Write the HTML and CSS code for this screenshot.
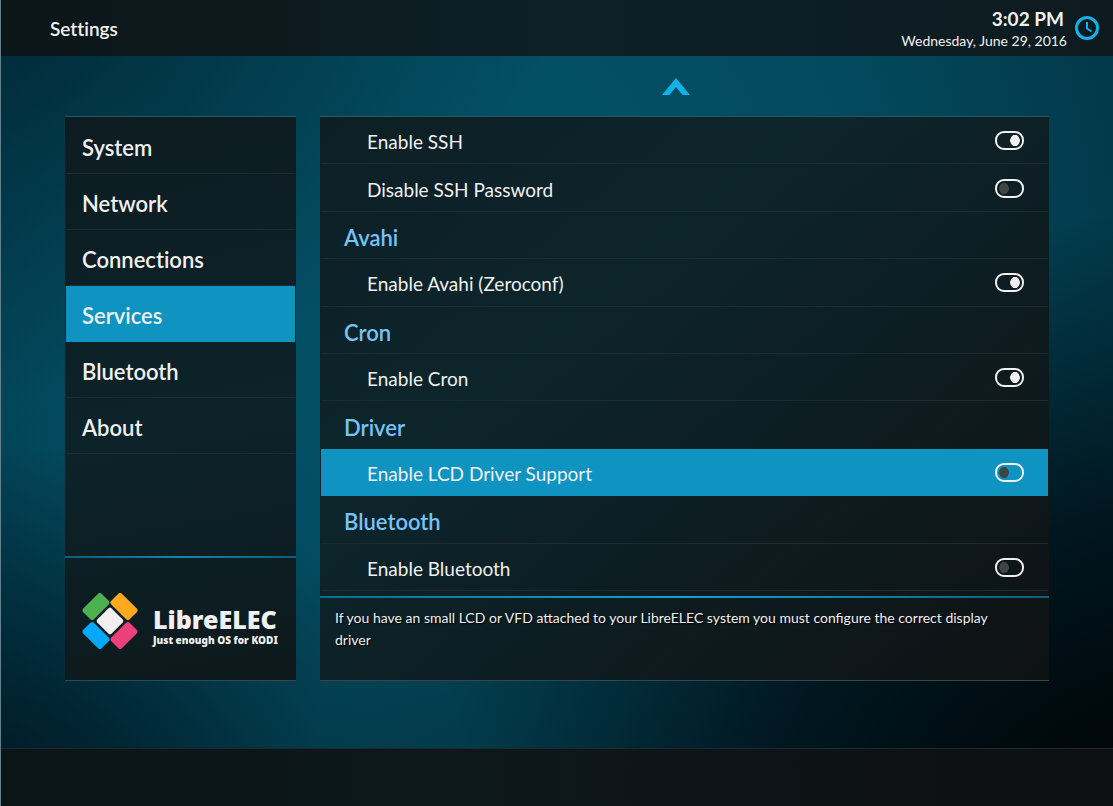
FILE: index.html
```html
<!DOCTYPE html>
<html lang="en">
<head>
	<meta charset="utf-8">
	<title>LibreELEC Settings</title>
	<link rel="stylesheet" href="styles.css">
</head>
<body>

	<header class="topbar">
		<h1>Settings</h1>
		<div class="clock">
			<div class="time">3:02 PM</div>
			<div class="date">Wednesday, June 29, 2016</div>
		</div>
		<svg class="clock-icon" width="24" height="24" viewBox="0 0 24 24" fill="none" stroke="#12b2e7">
			<circle cx="12" cy="12" r="10.5" stroke-width="3"/>
			<path d="M12 6v6.5l4.5 3" stroke-width="2"/>
		</svg>
	</header>

	<main>
		<aside class="panel sidebar">
			<nav>
				<a href="#system">System</a>
				<a href="#network">Network</a>
				<a href="#connections">Connections</a>
				<a href="#services" class="active">Services</a>
				<a href="#bluetooth">Bluetooth</a>
				<a href="#about">About</a>
			</nav>
			<div class="logo">
				<svg width="56" height="56" viewBox="0 0 56 56">
					<rect x="1" y="6" width="26" height="15" rx="2.5" fill="#4caf50" transform="rotate(-45 14 13.5)"/>
					<rect x="29" y="6" width="26" height="15" rx="2.5" fill="#ffa91f" transform="rotate(45 42 13.5)"/>
					<rect x="1" y="35" width="26" height="15" rx="2.5" fill="#03a9f9" transform="rotate(45 14 42.5)"/>
					<rect x="29" y="35" width="26" height="15" rx="2.5" fill="#ec407a" transform="rotate(-45 42 42.5)"/>
					<rect x="18" y="18" width="20" height="20" rx="2" fill="#f0f0f0" transform="rotate(45 28 28)"/>
				</svg>
				<div class="logo-text">
					<div class="logo-name">LibreELEC</div>
					<div class="logo-sub">Just enough OS for KODI</div>
				</div>
			</div>
		</aside>

		<section class="panel content">
			<svg class="scroll-up" width="28" height="17" viewBox="0 0 28 17">
				<path d="M14 0L28 17H20.500L14 9L7.500 17H0z" fill="#12b2e7"/>
			</svg>
			<div class="settings">
				<label class="row">Enable SSH <input type="checkbox" checked></label>
				<label class="row">Disable SSH Password <input type="checkbox"></label>
				<h2 class="row">Avahi</h2>
				<label class="row">Enable Avahi (Zeroconf) <input type="checkbox" checked></label>
				<h2 class="row">Cron</h2>
				<label class="row">Enable Cron <input type="checkbox" checked></label>
				<h2 class="row before-active">Driver</h2>
				<label class="row active">Enable LCD Driver Support <input type="checkbox"></label>
				<h2 class="row">Bluetooth</h2>
				<label class="row">Enable Bluetooth <input type="checkbox"></label>
			</div>
			<p class="description">If you have an small LCD or VFD attached to your LibreELEC system you must configure the correct display driver</p>
		</section>
	</main>

	<footer></footer>

</body>
</html>
```

FILE: styles.css
```css
* {
	box-sizing: border-box;
}
body {
	margin: 0;
	min-height: 100vh;
	display: flex;
	flex-direction: column;
	border-left: 1px solid #64808c;
	color: #f0f0f0;
	font-family: Lato, "Liberation Sans", sans-serif;
	background-color: #02323f;
	background-image:
		radial-gradient(ellipse at 105% 100%, #00060a 5%, rgba(0, 10, 16, 0.75) 25%, rgba(0, 20, 28, 0) 52%),
		radial-gradient(ellipse at -5% 100%, rgba(0, 20, 30, 0.8) 5%, rgba(0, 24, 34, 0) 32%),
		radial-gradient(ellipse at 0% 0%, rgba(0, 30, 42, 0.7), rgba(0, 30, 42, 0) 35%),
		radial-gradient(ellipse 80% 130% at 42% 35%, #03546a 0%, #034a5e 45%, #02394a 75%, #012733 100%);
}
h1, h2, p {
	margin: 0;
}

/* top bar */
.topbar {
	display: flex;
	align-items: center;
	height: 56px;
	padding: 0 14px 0 49px;
	background: linear-gradient(90deg, #0c1518, #0d2026 50%, #0d1b20);
}
.topbar h1 {
	flex: 1;
	font-size: 19px;
	font-weight: 600;
	font-variant-ligatures: none;
}
.clock {
	padding-top: 1px;
	text-align: right;
}
.time {
	padding-right: 3px;
	font-size: 19px;
	line-height: 24px;
	font-weight: 700;
}
.date {
	font-size: 14px;
	line-height: 20px;
}
.clock-icon {
	margin-left: 8px;
}

/* panels */
main {
	flex: 1;
	display: grid;
	grid-template-columns: 231px 1fr;
	gap: 24px;
	padding: 60px 64px 67px;
}
.panel {
	display: flex;
	flex-direction: column;
	border-top: 1px solid #2b5560;
	border-bottom: 1px solid #34494f;
}
.sidebar {
	background: linear-gradient(170deg, #0d1c21, #0c2329 55%, #0d191c);
}
.content {
	position: relative;
	background: linear-gradient(140deg, #0d1f25, #0c252b 35%, #0d1c21 65%, #0f1213);
}

nav {
	flex: 1;
	padding-top: 1px;
}
nav a {
	display: flex;
	align-items: center;
	height: 56px;
	margin: 0 1px;
	padding: 3px 16px 0;
	border-bottom: 1px solid #1a2c31;
	color: #f0f0f0;
	font-size: 22px;
	font-weight: 600;
	font-variant-ligatures: none;
	text-decoration: none;
}
.active {
	background: #0f94c1;
}

.logo {
	display: flex;
	align-items: center;
	gap: 15px;
	height: 124px;
	padding: 4px 16px 0 17px;
	border-top: 2px solid;
	border-image: linear-gradient(90deg, #0c5f78, #1286ac 50%, #0c5f78) 1;
}
.logo svg {
	flex-shrink: 0;
}
.logo-text {
	font-family: "Noto Sans", sans-serif;
	font-weight: 900;
	white-space: nowrap;
}
.logo-name {
	padding-top: 10px;
	font-size: 25px;
	line-height: 28px;
}
.logo-sub {
	font-size: 10px;
	line-height: 14px;
}

/* settings list */
.scroll-up {
	position: absolute;
	top: -39px;
	left: 50%;
	margin-left: -23px;
}
.settings {
	flex: 1;
	display: grid;
	grid-auto-rows: 1fr;
	padding: 0 1px 5px;
}
.row {
	display: flex;
	align-items: center;
	justify-content: space-between;
	padding: 4px 24px 0 46px;
	border-bottom: 1px solid #1c2c31;
	font-size: 19px;
	line-height: 24px;
}
h2.row {
	padding-top: 6px;
	padding-left: 23px;
	color: #76c3fa;
	font-size: 22px;
	font-weight: 600;
}
.before-active,
.row.active,
nav .active {
	border-color: transparent;
}
input[type=checkbox] {
	appearance: none;
	width: 29px;
	height: 19px;
	margin: 0 0 3px;
	border: 2px solid #f0f0f0;
	border-radius: 9px;
	background: radial-gradient(5px 6px at 7px 50%, #3f4445 90%, transparent);
}
input[type=checkbox]:checked {
	background: radial-gradient(5px 6px at 18px 50%, #f0f0f0 90%, transparent);
}
.description {
	min-height: 84px;
	padding: 9px 24px 9px 15px;
	border-top: 2px solid;
	border-image: linear-gradient(90deg, #0c6f8e, #12a0d0 50%, #0c5f78) 1;
	font-size: 14px;
	line-height: 22px;
	text-shadow: 1px 1px 1px #000;
}

footer {
	height: 58px;
	border-top: 1px solid #1c2a2d;
	background: linear-gradient(90deg, #0b1417, #0d181c 40%, #0e0f10);
}
```
